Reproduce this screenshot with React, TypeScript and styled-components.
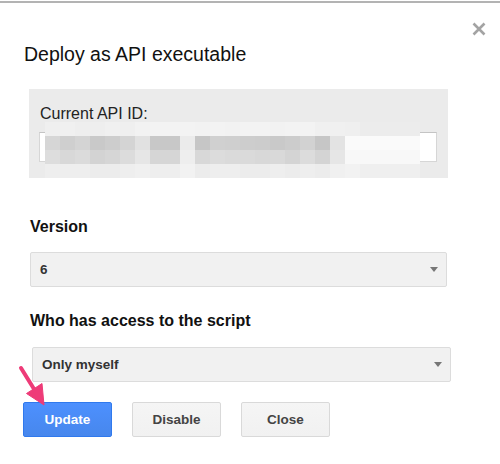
import React from 'react'
import styled, { createGlobalStyle } from 'styled-components'

// pixelated (blurred) API id, one array per row of 15px cells
const blurRows: string[][] = [
    ['ef', 'f0', 'ee', 'ee', 'f0', 'ef', 'f2', 'f3', 'f3', 'f3', 'f2', 'f3', 'f2', 'f3', 'f3', 'f2', 'f3', 'f3', 'f0', 'f0', 'ef', 'ec', 'ec', 'ec', 'ec'],
    ['d6', 'cf', 'd4', 'c9', 'cd', 'd4', 'e1', 'c8', 'c8', 'eb', 'c6', 'd0', 'cf', 'cd', 'cc', 'c9', 'cc', 'd2', 'c6', 'e3', 'fa', 'fa', 'fa', 'fa', 'fa'],
    ['dd', 'd8', 'db', 'd3', 'd6', 'dc', 'e6', 'd6', 'd6', 'ee', 'd8', 'dc', 'da', 'da', 'd8', 'd9', 'd4', 'dc', 'd4', 'e6', 'f8', 'f8', 'f8', 'f8', 'f8'],
    ['ee', 'ee', 'ee', 'ec', 'ec', 'ee', 'f0', 'ee', 'ee', 'f2', 'ec', 'ee', 'ee', 'ec', 'ec', 'ee', 'ec', 'ee', 'ec', 'f0', 'f2', 'ef', 'ef', 'ef', 'ef'],
]

const App: React.FC = () => {
    return (
        <>
            <GlobalStyle />
            <Dialog>
                <CloseButton aria-label="Close">
                    <svg width="14" height="14" viewBox="0 0 14 14">
                        <path d="M1.5 1.5 L12.5 12.5 M12.5 1.5 L1.5 12.5" stroke="#a3a3a3" strokeWidth="2.6" />
                    </svg>
                </CloseButton>

                <Title>Deploy as API executable</Title>

                <IdPanel>
                    <PanelLabel>Current API ID:</PanelLabel>
                    <IdInput readOnly value="" />
                    <BlurOverlay width="375" height="56" viewBox="0 0 375 56">
                        {blurRows.map((row, r) =>
                            row.map((shade, c) => (
                                <rect key={`${r}-${c}`} x={c * 15} y={r * 14} width="15" height="14" fill={`#${shade}${shade}${shade}`} />
                            ))
                        )}
                    </BlurOverlay>
                </IdPanel>

                <FieldLabel $top={40}>Version</FieldLabel>
                <Select $left={30} $top={16} $width={417}>
                    <span>6</span>
                    <Caret />
                </Select>

                <FieldLabel $top={25}>Who has access to the script</FieldLabel>
                <Select $left={32} $top={17} $width={419}>
                    <span>Only myself</span>
                    <Caret />
                </Select>

                <ButtonRow>
                    <Button $primary>Update</Button>
                    <Button>Disable</Button>
                    <Button>Close</Button>
                </ButtonRow>

                <Pointer width="60" height="50" viewBox="0 0 60 50">
                    <line x1="21" y1="8" x2="34" y2="29" stroke="#ee3b78" strokeWidth="4" strokeLinecap="round" />
                    <polygon points="44,45 26.5,33.5 42,23.5" fill="#ee3b78" strokeLinejoin="round" stroke="#ee3b78" strokeWidth="1" />
                </Pointer>
            </Dialog>
        </>
    )
}

export default App

const GlobalStyle = createGlobalStyle`
    body {
        margin: 0;
        background: #fff;
        font-family: Arial, "Liberation Sans", Helvetica, sans-serif;
    }
`

const Dialog = styled.div`
    position: relative;
    margin-top: 1px;
    height: 461px;
    border-top: 2px solid #b3b3b3;
    padding-top: 40px;
    box-sizing: border-box;
`

const CloseButton = styled.button`
    position: absolute;
    top: 19px;
    right: 14px;
    width: 14px;
    height: 14px;
    padding: 0;
    border: none;
    background: none;
    display: flex;
`

const Title = styled.h1`
    margin: 0 0 0 24px;
    font-size: 19.5px;
    line-height: 22px;
    font-weight: normal;
    color: #111;
`

const IdPanel = styled.div`
    position: relative;
    margin: 24px 0 0 29px;
    width: 419px;
    padding: 16px 11px;
    box-sizing: border-box;
    background: #ebebeb;
    display: flex;
    flex-direction: column;
    gap: 9px;
`

const PanelLabel = styled.div`
    font-size: 16px;
    line-height: 18px;
    color: #222;
`

const IdInput = styled.input`
    width: 398px;
    height: 30px;
    box-sizing: border-box;
    margin: 0 0 0 -1px;
    border: 1px solid #d6d6d6;
    border-top-color: #c4c4c4;
    background: #fff;
    outline: none;
`

const BlurOverlay = styled.svg`
    position: absolute;
    left: 16px;
    top: 33px;
`

const FieldLabel = styled.div<{ $top: number }>`
    margin: ${p => p.$top}px 0 0 30px;
    font-size: 16px;
    line-height: 18px;
    font-weight: bold;
    color: #111;
`

const Select = styled.div<{ $left: number, $top: number, $width: number }>`
    margin: ${p => p.$top}px 0 0 ${p => p.$left}px;
    width: ${p => p.$width}px;
    height: 35px;
    box-sizing: border-box;
    padding: 0 8px 0 9px;
    display: flex;
    align-items: center;
    justify-content: space-between;
    background: #f1f1f1;
    border: 1px solid #dcdcdc;
    border-radius: 2px;
    font-size: 13.5px;
    font-weight: bold;
    color: #333;
`

const Caret = styled.i`
    width: 0;
    height: 0;
    border-left: 4.5px solid transparent;
    border-right: 4.5px solid transparent;
    border-top: 5px solid #777;
`

const ButtonRow = styled.div`
    margin: 20px 0 0 23px;
    display: flex;
    gap: 20px;
`

const Button = styled.button<{ $primary?: boolean }>`
    width: 89px;
    height: 35px;
    box-sizing: border-box;
    border-radius: 2px;
    font-family: Arial, "Liberation Sans", sans-serif;
    font-size: 13.5px;
    font-weight: bold;
    padding: 0;
    color: ${p => p.$primary ? '#fff' : '#444'};
    background: ${p => p.$primary ? 'linear-gradient(#4d90fe, #4787ed)' : 'linear-gradient(#f5f5f5, #f1f1f1)'};
    border: 1px solid ${p => p.$primary ? '#3079ed' : '#d9d9d9'};
`

const Pointer = styled.svg`
    position: absolute;
    left: 0;
    top: 357px;
`
